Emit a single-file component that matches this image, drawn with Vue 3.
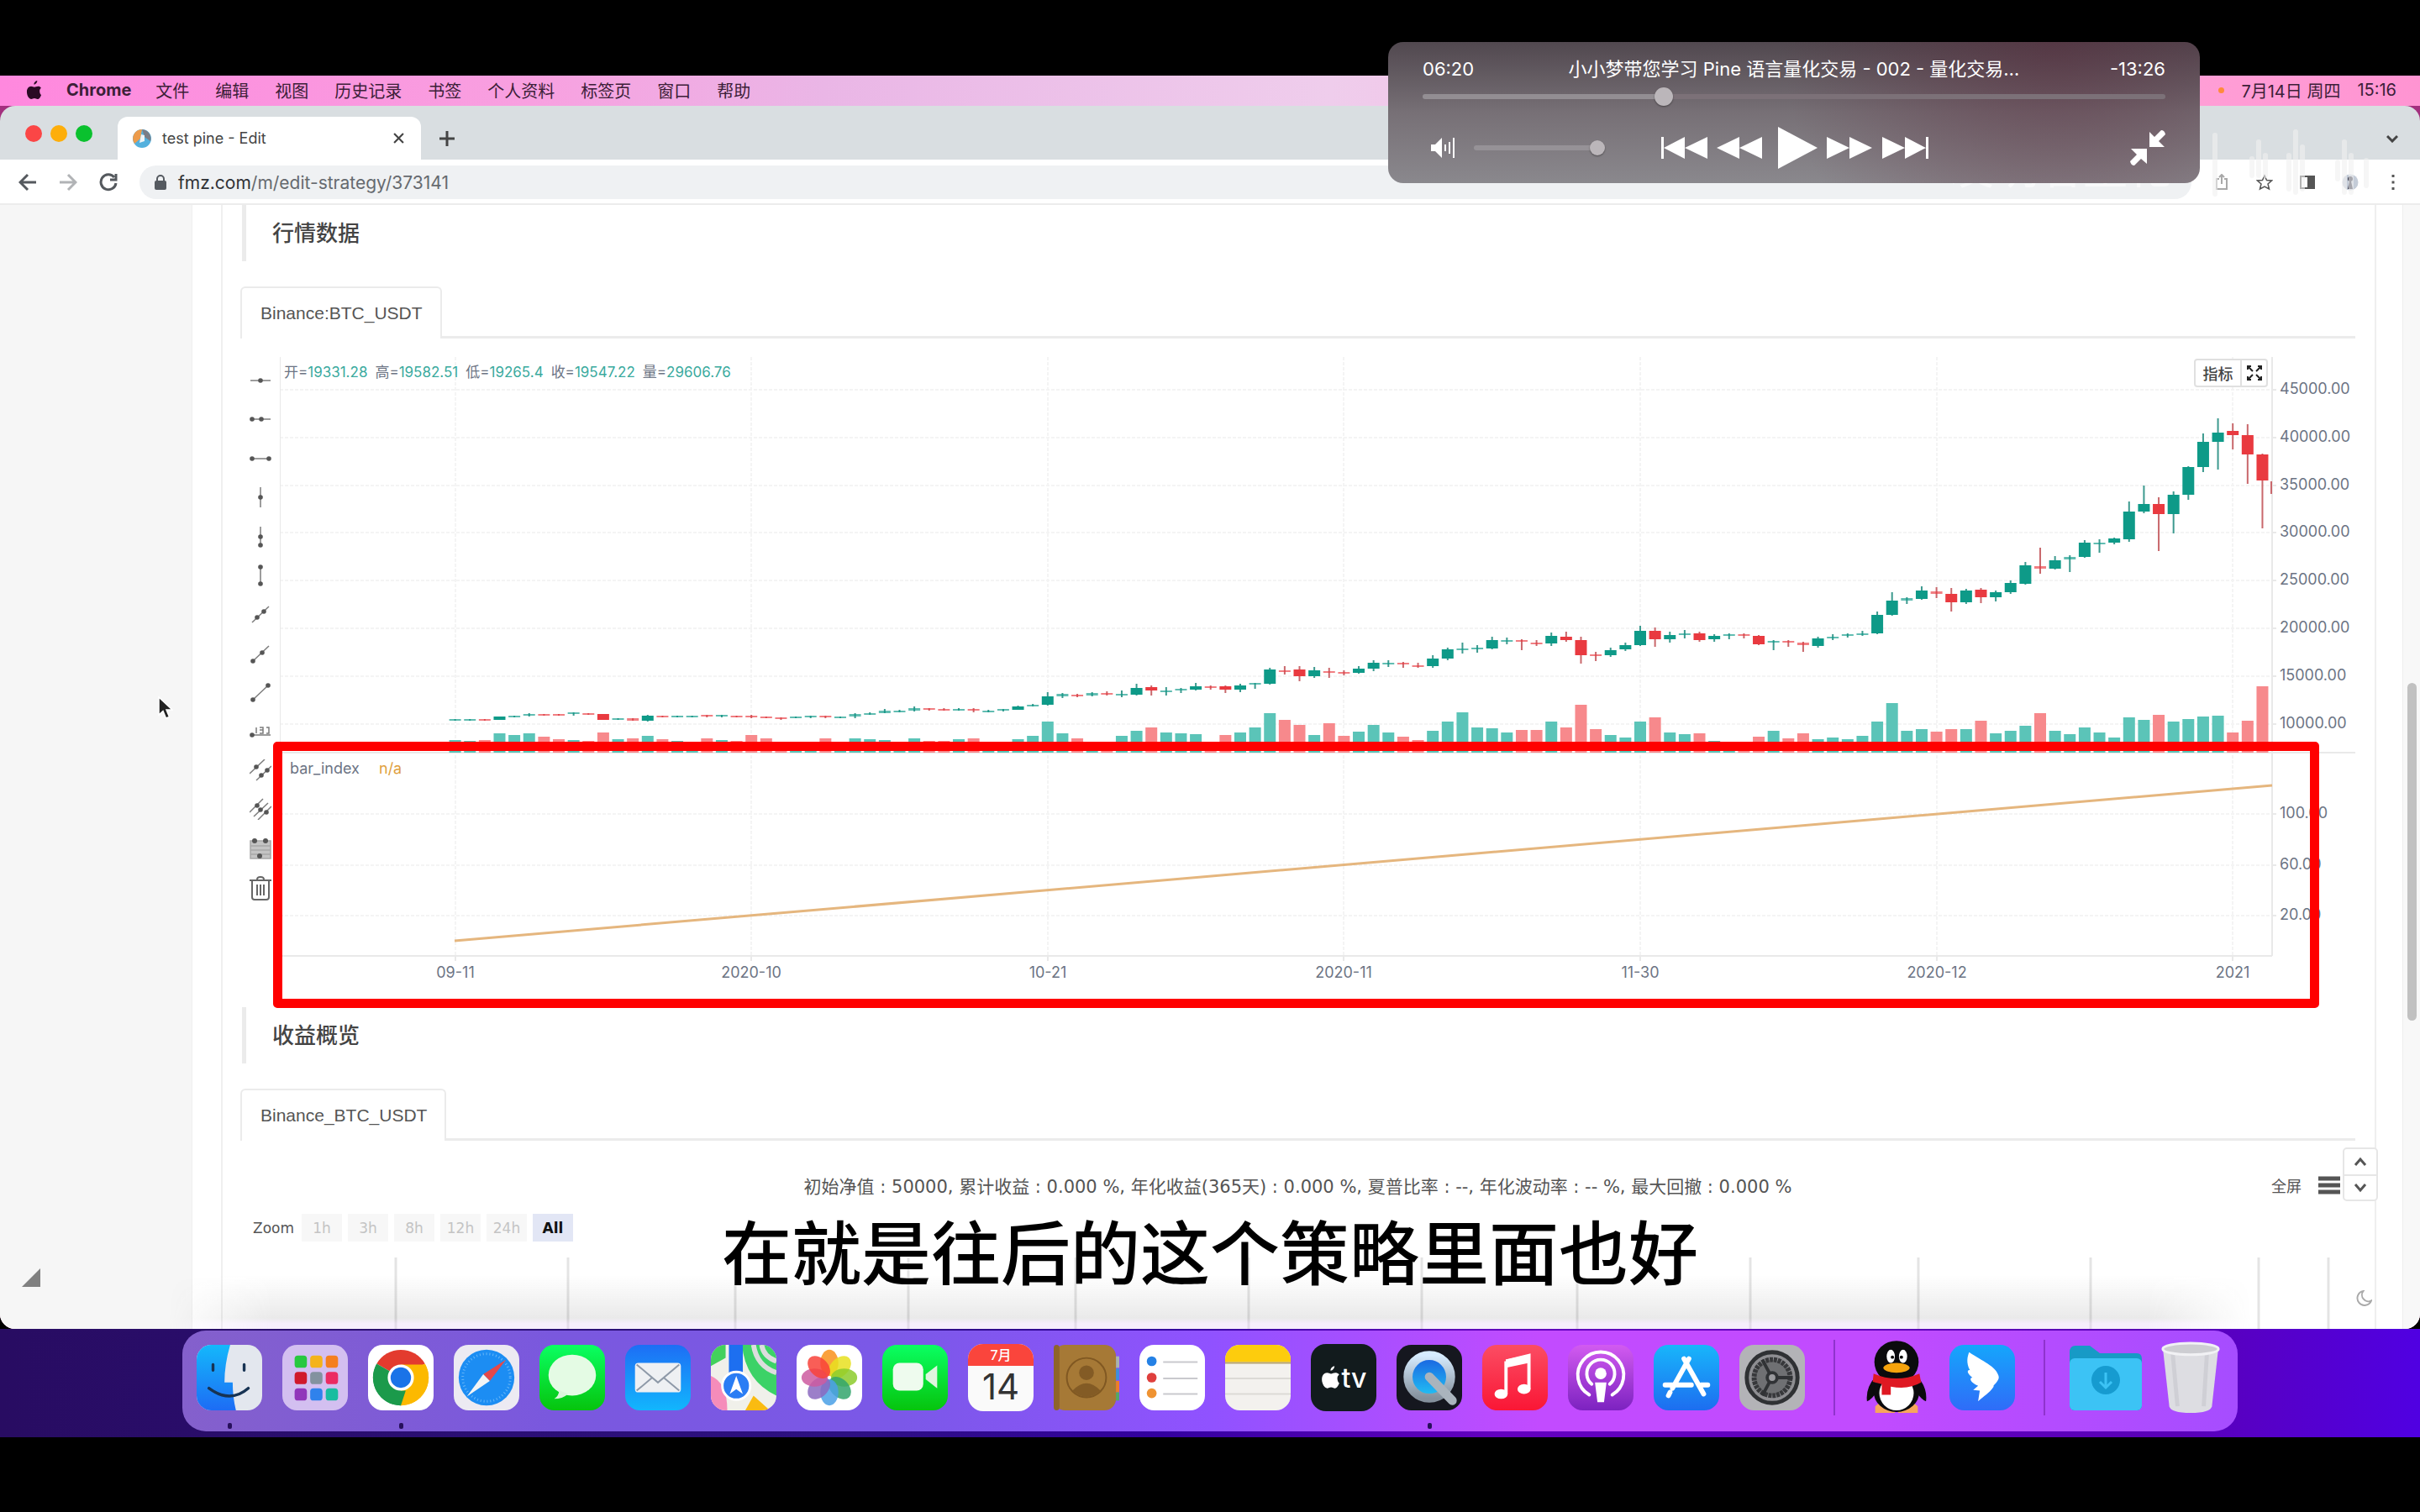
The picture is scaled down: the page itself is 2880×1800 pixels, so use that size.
<script setup>
const menus = ['文件', '编辑', '视图', '历史记录', '书签', '个人资料', '标签页', '窗口', '帮助']

// Layout of the price pane, in chart units
const FIRST_X = 541.6
const STEP = 17.63
const VOLUME_BASE = 896
const barX = (i) => FIRST_X + STEP * i

// [rising, body top, body bottom, wick top, wick bottom, volume top]
const bars = [
  [1, 856, 858, 856, 858, 881], [1, 856, 858, 856, 858, 882], [0, 856, 858, 856, 858, 881], [1, 853, 857, 853, 857, 873],
  [1, 852, 854, 852, 854, 875], [1, 850, 852, 849, 853, 873], [0, 850, 852, 850, 852, 877], [0, 850, 852, 850, 852, 880],
  [1, 848, 850, 848, 852, 881], [0, 849, 851, 849, 851, 882], [0, 850, 857, 850, 857, 872], [1, 855, 857, 855, 857, 880],
  [0, 855, 858, 855, 858, 879], [1, 852, 858, 851, 859, 876], [0, 852, 854, 852, 854, 880], [1, 852, 854, 852, 854, 882],
  [1, 852, 854, 852, 854, 883], [0, 851, 853, 851, 854, 879], [1, 851, 853, 851, 854, 881], [0, 852, 854, 852, 854, 882],
  [0, 852, 854, 851, 855, 875], [0, 853, 855, 853, 855, 879], [0, 854, 856, 854, 857, 884], [1, 853, 855, 853, 855, 885],
  [1, 852, 854, 852, 855, 883], [0, 852, 854, 852, 855, 879], [1, 853, 855, 853, 855, 884], [1, 850, 853, 849, 855, 879],
  [1, 849, 851, 848, 851, 880], [1, 846, 849, 844, 849, 881], [1, 846, 848, 845, 848, 884], [1, 843, 846, 841, 847, 879],
  [0, 843, 845, 843, 846, 882], [0, 844, 846, 843, 846, 882], [1, 844, 846, 843, 846, 880], [0, 844, 846, 843, 848, 879],
  [1, 846, 848, 845, 848, 884], [1, 844, 846, 844, 847, 884], [1, 841, 845, 840, 845, 880], [1, 839, 841, 838, 841, 876],
  [1, 829, 839, 824, 840, 859], [1, 826, 829, 825, 831, 873], [0, 827, 829, 826, 830, 879], [1, 825, 828, 824, 829, 884],
  [0, 825, 827, 823, 828, 884], [1, 826, 828, 822, 830, 876], [1, 819, 827, 814, 828, 870], [0, 818, 822, 816, 828, 866],
  [1, 822, 824, 818, 828, 872], [1, 820, 822, 819, 825, 873], [1, 817, 821, 813, 822, 874], [0, 817, 819, 816, 821, 884],
  [0, 817, 821, 816, 825, 875], [1, 816, 821, 814, 824, 872], [1, 813, 815, 813, 820, 866], [1, 797, 814, 795, 815, 849],
  [0, 798, 800, 793, 803, 857], [0, 797, 805, 793, 811, 863], [1, 798, 805, 794, 807, 875], [0, 799, 801, 795, 807, 861],
  [0, 800, 802, 798, 804, 876], [1, 796, 801, 793, 802, 871], [1, 789, 796, 786, 799, 863], [1, 789, 791, 786, 794, 872],
  [0, 789, 791, 788, 795, 877], [0, 792, 794, 789, 795, 881], [1, 784, 793, 780, 795, 870], [1, 773, 784, 771, 786, 859],
  [1, 772, 774, 765, 778, 848], [1, 771, 773, 768, 777, 866], [1, 762, 772, 758, 773, 867], [1, 762, 764, 759, 767, 872],
  [0, 762, 764, 761, 774, 869], [0, 765, 767, 762, 769, 869], [1, 757, 766, 753, 769, 859], [0, 758, 762, 752, 764, 866],
  [0, 762, 780, 758, 790, 839], [0, 779, 781, 776, 787, 868], [1, 774, 780, 771, 782, 875], [1, 768, 773, 765, 775, 878],
  [1, 751, 768, 745, 769, 859], [0, 751, 761, 747, 770, 854], [1, 756, 761, 752, 765, 872], [1, 754, 756, 750, 760, 874],
  [0, 754, 762, 752, 764, 873], [1, 757, 761, 755, 764, 882], [1, 755, 757, 754, 761, 884], [0, 755, 757, 754, 760, 884],
  [0, 757, 767, 756, 768, 877], [1, 763, 765, 762, 774, 870], [0, 763, 765, 762, 770, 879], [0, 765, 768, 764, 776, 873],
  [1, 760, 769, 758, 771, 880], [1, 758, 760, 755, 762, 878], [1, 755, 757, 754, 759, 880], [1, 754, 756, 751, 757, 876],
  [1, 732, 754, 728, 755, 859], [1, 715, 732, 705, 733, 837], [1, 712, 715, 711, 719, 870], [1, 703, 713, 698, 714, 868],
  [0, 704, 707, 699, 712, 871], [0, 707, 717, 700, 728, 868], [1, 703, 717, 701, 719, 868], [0, 702, 711, 700, 718, 858],
  [1, 705, 711, 703, 716, 873], [1, 694, 705, 691, 707, 870], [1, 673, 695, 669, 696, 864], [0, 674, 677, 652, 683, 849],
  [1, 667, 677, 662, 678, 870], [1, 663, 666, 661, 681, 874], [1, 646, 663, 643, 664, 866], [1, 646, 648, 642, 658, 872],
  [1, 641, 646, 640, 648, 878], [1, 609, 642, 597, 645, 854], [1, 600, 609, 578, 611, 857], [0, 600, 612, 592, 656, 851],
  [1, 589, 612, 585, 635, 859], [1, 556, 589, 555, 595, 856], [1, 526, 556, 516, 562, 853], [1, 515, 526, 498, 559, 852],
  [0, 513, 518, 504, 535, 872], [0, 518, 541, 505, 576, 858], [0, 541, 572, 540, 629, 817],
]

const prices = [45000, 40000, 35000, 30000, 25000, 20000, 15000, 10000].map((p, i) => ({ label: p.toFixed(2), y: Math.round(464 + 56.8 * i) }))
const indexTicks = [{ label: '100.00', y: 969 }, { label: '60.00', y: 1030 }, { label: '20.00', y: 1090 }]
const dates = ['09-11', '2020-10', '10-21', '2020-11', '11-30', '2020-12', '2021'].map((label, i) => ({ label, x: Math.round(barX(20 * i)) }))
const quote = [['开', '19331.28'], ['高', '19582.51'], ['低', '19265.4'], ['收', '19547.22'], ['量', '29606.76']]

const tools = [
  ['水平直线', 'M1 13H25', [[13, 13]]],
  ['水平射线', 'M2 13H25', [[3, 13], [14, 13]]],
  ['水平线段', 'M2 13H24', [[3, 13], [23, 13]]],
  ['垂直直线', 'M13 1V25', [[13, 13]]],
  ['垂直射线', 'M13 1V24', [[13, 13], [13, 23]]],
  ['垂直线段', 'M13 2V24', [[13, 3], [13, 23]]],
  ['直线', 'M3 23L23 4', [[9, 17], [17, 10]]],
  ['射线', 'M4 22L23 4', [[4, 22], [15, 12]]],
  ['线段', 'M4 22L22 5', [[4, 22], [22, 5]]],
  ['价格线', 'M2 18H25M8 9V16M12 9H16V12H12M16 12V16H12M20 9H23V16H20', [[3, 18]]],
  ['价格通道', 'M0 17L18 0M8 25L26 8', [[8, 9], [14, 19], [21, 13]]],
  ['平行线', 'M0 17L16 1M5 22L22 6M10 26L26 10', [[9, 9], [13, 14], [20, 17]]],
]

const ranges = ['1h', '3h', '8h', '12h', '24h', 'All']
const returnGrid = [471, 676, 875, 1081, 1280, 1486, 1692, 1877, 2083, 2283, 2488, 2688, 2771]
const petals = ['#f9901b', '#e8e020', '#8ccb2b', '#33a46c', '#4aa0e6', '#8b68c0', '#cc5aa0', '#f8423a']
</script>

<template>
  <div class="screen">
    <header class="menubar">
      <svg class="apple" viewBox="0 0 20 24"><path d="M14 0c.2 2-1.700 4.600-4 4.800C9.700 2.700 11.800.4 14 0zM17 12.500c0-2.200 1.700-3.300 1.900-3.500C17.800 7.300 16 7 15 7c-1.800 0-3.300 1-4.500 1C9.300 8 8 7 6.300 7 3.500 7.100 1 9.400 1 14c0 4.600 3 9 5.500 9 1.500 0 2.300-1 4-1s2.300 1 4 1c2.200 0 4-3.500 4.500-5.300-.200-.1-2-1.300-2-5.200z" /></svg>
      <b>Chrome</b>
      <nav class="menus"><span v-for="m in menus" :key="m">{{ m }}</span></nav>
      <i class="rec"></i>
      <time>7月14日 周四</time><time class="clock">15:16</time>
    </header>

    <section class="window">
      <div class="tabstrip">
        <div class="lights"><i class="red"></i><i class="amber"></i><i class="green"></i></div>
        <div class="tab">
          <svg class="favicon" viewBox="0 0 22 22"><circle cx="11" cy="11" r="11" fill="#54b0dd" /><path d="M11 0A11 11 0 0 0 2 17L9 11Z" fill="#ed9b4b" /><path d="M11 0a11 11 0 0 1 10 14l-7-5Z" fill="#7b7d86" /><path d="M8 16l2-10 4 1v7z" fill="#eef3f6" /></svg>
          <span>test pine - Edit</span>
          <button aria-label="关闭标签页"><svg viewBox="0 0 12 12"><path d="M1 1l10 10M11 1L1 11" /></svg></button>
        </div>
        <button class="newtab" aria-label="新标签页"><svg viewBox="0 0 18 18"><path d="M9 0v18M0 9h18" /></svg></button>
        <button class="expand" aria-label="搜索标签页"><svg viewBox="0 0 14 10"><path d="M1 2l6 6 6-6" /></svg></button>
      </div>
      <div class="toolbar">
        <button aria-label="后退"><svg viewBox="0 0 22 22"><path d="M21 11H2M11 2l-9 9 9 9" /></svg></button>
        <button aria-label="前进" class="dim"><svg viewBox="0 0 22 22"><path d="M1 11h19M11 2l9 9-9 9" /></svg></button>
        <button aria-label="重新加载"><svg viewBox="0 0 22 22"><path d="M18 5a9 9 0 1 0 2 7M20 1v7h-7" /></svg></button>
        <div class="url">
          <svg class="lock" viewBox="0 0 14 18"><rect y="7" width="14" height="11" rx="2" fill="#555a60" /><path d="M3 8V5a4 4 0 0 1 8 0v3" fill="none" stroke="#555a60" stroke-width="2" /></svg>
          <p><span>fmz.com</span>/m/edit-strategy/373141</p>
        </div>
        <div class="ext">
          <svg viewBox="0 0 20 20" opacity=".5"><path d="M7 6H4v12h12V6h-3M10 12V2M7 4l3-3 3 3" /></svg>
          <svg viewBox="0 0 20 20"><path d="M10 2l2.500 5.500 6 .5-4.500 4 1.500 6L10 15l-5.500 3 1.500-6-4.500-4 6-.5z" stroke-width="1.500" /></svg>
          <svg viewBox="0 0 20 20"><path d="M2 3h16v14H2z" /><path d="M11 3h7v14h-7z" fill="#555" /></svg>
          <svg viewBox="0 0 20 20"><circle cx="10" cy="10" r="9.500" fill="#c4ccd8" stroke="none" /><circle cx="10" cy="6" r="3" fill="#334" stroke="none" /><path d="M7 18l2-9h2l2 9z" fill="#334" stroke="none" /></svg>
          <svg viewBox="0 0 20 20"><path d="M10 1v3M10 8.500v3M10 16v3" stroke-width="3" /></svg>
        </div>
      </div>

      <div class="page">
        <aside class="gutter"></aside>
        <main>
          <div class="card">
            <h2>行情数据</h2>
            <div class="tabs"><a href="#quote">Binance:BTC_USDT</a><i></i></div>

            <div class="chartrow">
              <div class="tools">
                <button v-for="[name, d, dots] in tools" :key="name" :aria-label="name">
                  <svg viewBox="0 0 26 26"><path :d="d" fill="none" stroke="#7c7c7c" stroke-width="1.500" /><circle v-for="(c, k) in dots" :key="k" :cx="c[0]" :cy="c[1]" r="2.800" fill="#555" /></svg>
                </button>
                <button aria-label="斐波那契"><svg viewBox="0 0 26 26"><path d="M1 4H25V25H1ZM1 10H25M1 15H25M1 20H25" fill="#c4c4c4" stroke="#a8a8a8" stroke-width="1.500" /><g fill="#555"><circle cx="6" cy="4" r="3" /><circle cx="19" cy="4" r="3" /><circle cx="12" cy="22" r="3" /></g></svg></button>
                <button aria-label="删除"><svg viewBox="0 0 26 30"><path d="M0 5H26M9 4Q9 1 13 1T17 4M3 5V25Q3 28 6 28H20Q23 28 23 25V5M9 10V23M13 10V23M17 10V23" fill="none" stroke="#666" stroke-width="2" /></svg></button>
              </div>

              <div class="plot">
                <svg class="chart" viewBox="333 418 2470 762">
                  <g class="grid">
                    <path v-for="p in prices" :key="p.y" :d="`M333 ${p.y}H2704`" />
                    <path v-for="p in indexTicks" :key="p.y" :d="`M333 ${p.y}H2704`" />
                    <path v-for="d in dates" :key="d.x" :d="`M${d.x} 425V1138`" />
                  </g>
                  <g class="axis">
                    <path d="M333 425V1138M333 896H2803M333 1138H2704M2704 425V1138" />
                    <path v-for="d in dates" :key="d.x" :d="`M${d.x} 1138v6`" />
                    <path v-for="p in [...prices, ...indexTicks]" :key="p.y" :d="`M2704 ${p.y}h5`" />
                  </g>
                  <g v-for="(b, i) in bars" :key="i" :class="b[0] ? 'up' : 'down'">
                    <rect class="vol" :x="barX(i) - 7" :y="b[5]" width="14" :height="VOLUME_BASE - b[5]" />
                    <rect class="wick" :x="barX(i) - 1" :y="b[3]" width="2" :height="b[4] - b[3]" />
                    <rect class="body" :class="{ thin: b[2] - b[1] < 4 }" :x="barX(i) - 7" :y="b[1]" width="14" :height="b[2] - b[1]" />
                  </g>
                  <rect class="wick down" x="2702" y="573" width="2" height="15" />
                  <path class="series" d="M541 1120L2704 935" />
                  <g class="labels">
                    <text v-for="p in prices" :key="p.y" x="2713" :y="p.y + 5">{{ p.label }}</text>
                    <text v-for="p in indexTicks" :key="p.y" x="2713" :y="p.y + 5">{{ p.label }}</text>
                    <text v-for="d in dates" :key="d.x" :x="d.x" y="1164" text-anchor="middle">{{ d.label }}</text>
                    <text x="345" y="921">bar_index</text>
                    <text x="451" y="921" class="na">n/a</text>
                  </g>
                </svg>
                <p class="quote"><span v-for="q in quote" :key="q[0]">{{ q[0] }}=<em>{{ q[1] }}</em></span></p>
                <div class="actions">
                  <button>指标</button>
                  <button aria-label="全屏"><svg viewBox="0 0 18 18"><path d="M1 5V1H5M1 1L7 7M13 1H17V5M17 1L11 7M1 13V17H5M1 17L7 11M17 13V17H13M17 17L11 11" /></svg></button>
                </div>
                <div class="highlight"></div>
              </div>
            </div>

            <h2>收益概览</h2>
            <div class="tabs"><a href="#returns">Binance_BTC_USDT</a><i></i></div>
            <div class="returns">
              <div class="stats">
                <span></span>
                <p>初始净值 : 50000, 累计收益 : 0.000 %, 年化收益(365天) : 0.000 %, 夏普比率 : --, 年化波动率 : -- %, 最大回撤 : 0.000 %</p>
                <div class="exports"><button>全屏</button><button aria-label="图表菜单"><svg viewBox="0 0 26 22"><path d="M0 3H26M0 11H26M0 19H26" /></svg></button></div>
              </div>
              <div class="zoom"><span>Zoom</span><button v-for="r in ranges" :key="r" :class="{ on: r === 'All' }">{{ r }}</button></div>
              <svg class="lines" viewBox="286 1496 2517 85" preserveAspectRatio="none"><path v-for="x in returnGrid" :key="x" :d="`M${x} 1496V1581`" /></svg>
            </div>
          </div>
        </main>
        <div class="scroll"><i></i></div>

        <div class="shade"></div>
        <div class="jump">
          <button aria-label="向上"><svg viewBox="0 0 16 12"><path d="M2 10l6-7 6 7" /></svg></button>
          <button aria-label="向下"><svg viewBox="0 0 16 12"><path d="M2 2l6 7 6-7" /></svg></button>
        </div>
        <svg class="moon" viewBox="0 0 20 20"><path d="M9 1A9 9 0 1 0 19 13 8 8 0 0 1 9 1z" /></svg>
        <svg class="corner" viewBox="0 0 22 22"><path d="M22 0V22H0z" fill="#808080" /></svg>
        <svg class="cursor" viewBox="0 0 18 28"><path d="M1 1V22L6 17.500 9.500 26 13.500 24.500 10 16H17z" fill="#222" stroke="#fff" stroke-width="1.500" /></svg>
      </div>
    </section>

    <footer class="desk">
      <div class="dock">
        <div class="app run"><svg viewBox="0 0 80 80"><defs><linearGradient id="fb" x2="0" y2="1"><stop stop-color="#14b8fb" /><stop offset="1" stop-color="#1d6cf5" /></linearGradient><clipPath id="sq"><rect width="80" height="80" rx="18" /></clipPath></defs><g clip-path="url(#sq)"><path fill="#e3e7ee" d="M0 0h80v80H0z" /><path fill="url(#fb)" d="M0 0h41Q34 24 34 46h10Q44 64 48 80H0z" /><g fill="none" stroke="#173353" stroke-width="3.500" stroke-linecap="round"><path d="M20 24v7M58 24v7M15 53q26 19 48 0" /></g></g></svg></div>
        <div class="app"><svg viewBox="0 0 80 80"><rect width="80" height="80" rx="18" fill="#d3bff0" /><g><rect x="15" y="13" width="15" height="15" rx="4" fill="#28c840" /><rect x="34" y="13" width="15" height="15" rx="4" fill="#f4b31c" /><rect x="53" y="13" width="15" height="15" rx="4" fill="#f57f1f" /><rect x="15" y="33" width="15" height="15" rx="4" fill="#d0192b" /><rect x="34" y="33" width="15" height="15" rx="4" fill="#83929f" /><rect x="53" y="33" width="15" height="15" rx="4" fill="#eb2b62" /><rect x="15" y="53" width="15" height="15" rx="4" fill="#9136ba" /><rect x="34" y="53" width="15" height="15" rx="4" fill="#2f82ec" /><rect x="53" y="53" width="15" height="15" rx="4" fill="#19bda0" /></g></svg></div>
        <div class="app run"><svg viewBox="0 0 80 80"><rect width="80" height="80" rx="18" fill="#fff" /><path d="M40 40L10.600 23A34 34 0 0 1 69.400 23z" fill="#e33b2e" /><path d="M40 40L69.400 23A34 34 0 0 1 40 74z" fill="#fcb900" /><path d="M40 40L40 74A34 34 0 0 1 10.600 23z" fill="#1b9a4b" /><path d="M40 24H70A34 34 0 0 1 40 74L54 48z" fill="#fcb900" /><path d="M10.600 23L26 48 40 56 46 56 40 74A34 34 0 0 1 10.600 23z" fill="#1b9a4b" /><circle cx="40" cy="40" r="16" fill="#fff" /><circle cx="40" cy="40" r="12.500" fill="#1a73e8" /></svg></div>
        <div class="app"><svg viewBox="0 0 80 80"><rect width="80" height="80" rx="18" fill="#eceaf2" /><circle cx="40" cy="40" r="34" fill="#1c8df3" /><circle cx="40" cy="40" r="29" fill="none" stroke="#6ab8f8" stroke-width="3" stroke-dasharray="1 3" /><path d="M64 18L44 44 36 36z" fill="#e4484a" /><path d="M16 63L36 36 44 44z" fill="#f2f4f6" /></svg></div>
        <div class="app"><svg viewBox="0 0 80 80"><defs><linearGradient id="gr" x2="0" y2="1"><stop stop-color="#0aff62" /><stop offset="1" stop-color="#06c40d" /></linearGradient></defs><rect width="80" height="80" rx="18" fill="url(#gr)" /><ellipse cx="40" cy="37" rx="29" ry="25" fill="#e4fbe4" /><path d="M24 55q0 7-6 11 10 0 17-6z" fill="#dcf5dc" /></svg></div>
        <div class="app"><svg viewBox="0 0 80 80"><defs><linearGradient id="bl" x2="0" y2="1"><stop stop-color="#1d6ef5" /><stop offset="1" stop-color="#12b6fd" /></linearGradient></defs><rect width="80" height="80" rx="18" fill="url(#bl)" /><rect x="12" y="22" width="56" height="36" rx="4" fill="#eef0f3" /><path d="M14 24l26 22 26-22M14 56l19-16M66 56L47 40" fill="none" stroke="#8e99a8" stroke-width="2" /></svg></div>
        <div class="app"><svg viewBox="0 0 80 80"><g clip-path="url(#sq)"><path fill="#f0f0ea" d="M0 0h80v80H0z" /><path d="M0 0h18v16L0 26z" fill="#43d15c" /><path d="M38 0h42v62Q42 44 38 0z" fill="#3cd267" /><path d="M52 0q4 26 28 34M62 0q2 14 18 20" fill="none" stroke="#ddd" stroke-width="6" /><path d="M0 38q20 8 20 42H0z" fill="#f58cba" /><path d="M52 62L72 80H42z" fill="#fabb11" /><path d="M22 0h17v40H22z" fill="#1d6ff0" /><circle cx="31" cy="50" r="17" fill="#2a7df4" stroke="#fff" stroke-width="3" /><path d="M31 38l8 22-8-6-8 6z" fill="#fff" /></g></svg></div>
        <div class="app"><svg viewBox="0 0 80 80"><rect width="80" height="80" rx="18" fill="#fff" /><ellipse v-for="(c, i) in petals" :key="c" cx="40" cy="22" rx="11" ry="16" :fill="c" opacity=".85" :transform="`rotate(${i * 45} 40 40)`" /></svg></div>
        <div class="app"><svg viewBox="0 0 80 80"><rect width="80" height="80" rx="18" fill="url(#gr)" /><rect x="13" y="22" width="37" height="34" rx="8" fill="#eefbee" /><path d="M53 36l14-11v28L53 42z" fill="#dff5df" /></svg></div>
        <div class="app calendar"><span>7月</span><b>14</b></div>
        <div class="app"><svg viewBox="0 0 80 80"><path d="M72 14h8v14h-8z" fill="#a9b3b0" /><path d="M72 29h8v14h-8z" fill="#3e8ee0" /><path d="M72 44h8v14h-8z" fill="#ec7d2b" /><path d="M72 58h8v10h-8z" fill="#53a867" /><rect width="76" height="80" rx="14" fill="#a67936" /><rect width="7" height="80" rx="4" fill="#8e642a" /><g fill="none" stroke="#805822" stroke-width="2"><circle cx="40" cy="40" r="24" /></g><circle cx="40" cy="34" r="9" fill="#835b25" /><path d="M23 56q17-18 34 0-17 15-34 0z" fill="#835b25" /></svg></div>
        <div class="app"><svg viewBox="0 0 80 80"><rect width="80" height="80" rx="18" fill="#fff" /><circle cx="15" cy="20" r="6" fill="#2581e5" /><circle cx="15" cy="40" r="6" fill="#df3f3d" /><circle cx="15" cy="59" r="6" fill="#ef9332" /><path d="M29 21h42M29 41h42M29 60h42" stroke="#c9c9ce" stroke-width="2" /></svg></div>
        <div class="app"><svg viewBox="0 0 80 80"><g clip-path="url(#sq)"><path fill="#f3f1ee" d="M0 0h80v80H0z" /><path d="M0 0h80v21H0z" fill="#fdcc0d" /><path d="M0 22h80" stroke="#b7a46d" stroke-width="2" /><path d="M0 41h80M0 60h80" stroke="#dcdad6" stroke-width="2" /></g></svg></div>
        <div class="app tv"><svg viewBox="0 0 20 24"><path d="M14 0c.2 2-1.700 4.600-4 4.800C9.700 2.700 11.800.4 14 0zM17 12.500c0-2.200 1.700-3.300 1.900-3.500C17.800 7.300 16 7 15 7c-1.800 0-3.300 1-4.500 1C9.300 8 8 7 6.300 7 3.500 7.100 1 9.400 1 14c0 4.600 3 9 5.500 9 1.500 0 2.300-1 4-1s2.300 1 4 1c2.200 0 4-3.500 4.500-5.300-.200-.1-2-1.300-2-5.200z" fill="#fff" /></svg><span>tv</span></div>
        <div class="app run"><svg viewBox="0 0 80 80"><defs><linearGradient id="qt" x2="0" y2="1"><stop stop-color="#d6ecff" /><stop offset="1" stop-color="#84909c" /></linearGradient><linearGradient id="qb" x2="0" y2="1"><stop stop-color="#1a5fe0" /><stop offset="1" stop-color="#22c6f5" /></linearGradient></defs><rect width="80" height="80" rx="18" fill="#15171f" /><circle cx="40" cy="39" r="26" fill="url(#qb)" stroke="url(#qt)" stroke-width="11" /><path d="M40 39L68 68" stroke="#aab4bd" stroke-width="11" stroke-linecap="round" /></svg></div>
        <div class="app"><svg viewBox="0 0 80 80"><defs><linearGradient id="mu" x2="0" y2="1"><stop stop-color="#fb4d63" /><stop offset="1" stop-color="#fa1635" /></linearGradient></defs><rect width="80" height="80" rx="18" fill="url(#mu)" /><path d="M29 20L57 13V54" fill="none" stroke="#fff" stroke-width="4" /><path d="M29 18L57 12V22L29 28z" fill="#fff" /><path d="M29 20V60" stroke="#fff" stroke-width="4" /><ellipse cx="23" cy="60" rx="8" ry="6" fill="#fff" /><ellipse cx="51" cy="54" rx="8" ry="6" fill="#fff" /></svg></div>
        <div class="app"><svg viewBox="0 0 80 80"><defs><linearGradient id="po" x2="0" y2="1"><stop stop-color="#d25bf0" /><stop offset="1" stop-color="#7c22c0" /></linearGradient></defs><rect width="80" height="80" rx="18" fill="url(#po)" /><g fill="none" stroke="#fff" stroke-width="4" stroke-linecap="round"><path d="M26 61A28 28 0 1 1 54 61M29 48A17 17 0 1 1 51 48" /></g><circle cx="40" cy="35" r="7" fill="#fff" /><path d="M33 46h14l-3 24h-8z" fill="#fff" /></svg></div>
        <div class="app"><svg viewBox="0 0 80 80"><defs><linearGradient id="as" x2="0" y2="1"><stop stop-color="#18b6fb" /><stop offset="1" stop-color="#1d6df0" /></linearGradient></defs><rect width="80" height="80" rx="18" fill="url(#as)" /><g stroke="#fff" stroke-width="6" stroke-linecap="round"><path d="M43 17L23 53M37 17L61 60M14 49h32M58 49h8M20 58l-2 4" /></g></svg></div>
        <div class="app"><svg viewBox="0 0 80 80"><rect width="80" height="80" rx="18" fill="#b3b3b7" /><circle cx="40" cy="40" r="31" fill="#8e8e92" stroke="#2f3134" stroke-width="5" /><circle cx="40" cy="40" r="22" fill="#6f7073" stroke="#37383b" stroke-width="6" stroke-dasharray="4 1" /><g stroke="#303235" stroke-width="4"><circle cx="40" cy="40" r="6" fill="#9a9a9e" /><path d="M46 40h19M37 35L28 18M37 45L28 62" /></g></svg></div>
        <i class="sep"></i>
        <div class="app"><svg class="tall" viewBox="0 0 80 90"><g><path d="M14 80q10-10 24 0v8H14zM42 80q14-10 24 0v8H42z" fill="#f7a65c" /><path d="M14 44Q2 58 4 74q6-2 12-12zM66 44q12 14 10 30-6-2-12-12z" fill="#0b0b0d" /><ellipse cx="40" cy="62" rx="28" ry="25" fill="#0b0b0d" /><ellipse cx="40" cy="64" rx="21" ry="21" fill="#fff" /><ellipse cx="40" cy="26" rx="27" ry="26" fill="#0b0b0d" /><ellipse cx="33" cy="19" rx="5" ry="8" fill="#fff" /><ellipse cx="48" cy="19" rx="5" ry="8" fill="#fff" /><circle cx="35" cy="20" r="2" /><circle cx="46" cy="20" r="2" /><ellipse cx="40" cy="33" rx="16" ry="6" fill="#f5a30c" /><path d="M12 40q28 12 56 0l2 11Q55 60 33 56v10H22V53l-11-3z" fill="#df1822" /></g></svg></div>
        <div class="app"><svg viewBox="0 0 80 80"><defs><linearGradient id="di" x2="0" y2="1"><stop stop-color="#15a6fc" /><stop offset="1" stop-color="#2f6cf8" /></linearGradient></defs><rect width="80" height="80" rx="18" fill="url(#di)" /><path d="M24 9C40 20 57 26 60 38 62 44 52 50 54 51 48 60 42 62 35 69L37 56 29 55 35 50C25 46 24 40 28 40 20 34 22 30 25 31 20 22 22 14 24 9z" fill="#fff" /></svg></div>
        <i class="sep"></i>
        <div class="app wide"><svg viewBox="0 0 90 80"><path d="M2 10Q2 2 9 2H26L38 11H82Q88 11 88 18V72Q88 79 82 79H8Q2 79 2 72z" fill="#179ac6" /><rect x="2" y="17" width="86" height="62" rx="6" fill="#3cc3f5" /><circle cx="45" cy="43" r="17" fill="#169bd0" /><path d="M45 34v17M38 45l7 7 7-7" fill="none" stroke="#3cc3f5" stroke-width="3" /></svg></div>
        <div class="app"><svg class="tall" viewBox="0 0 80 90"><path d="M6 8Q40-4 74 8L66 80Q64 88 40 88T14 80z" fill="#dddde2" /><path d="M18 14L24 80M60 14L56 80" stroke="#cfcfd5" stroke-width="5" /><ellipse cx="40" cy="10" rx="34" ry="7" fill="#cdcdd2" stroke="#f1f1f4" stroke-width="3" /></svg></div>
      </div>
    </footer>

    <p class="subtitle">在就是往后的这个策略里面也好</p>
    <div class="watermark">
      <svg viewBox="0 0 210 90"><path d="M6 16v70M58 24v40M50 44v20M66 40v24M102 12v72M94 40v40M110 30v50M160 24v60M152 48v20M168 40v44M186 46v30" /></svg>
      <span>发明者量化</span>
    </div>

    <section class="player">
      <div class="info"><time>06:20</time><h1>小小梦带您学习 Pine 语言量化交易 - 002 - 量化交易…</h1><time>-13:26</time></div>
      <input class="seek" type="range" min="0" max="100" value="32" aria-label="播放进度" />
      <div class="controls">
        <svg class="speaker" viewBox="0 0 28 26"><path d="M0 9h5l8-8v24l-8-8H0z" fill="#fff" /><path d="M17 9v8M22 6v14M27 1v24" stroke="#fff" stroke-width="2" /></svg>
        <input class="volume" type="range" min="0" max="100" value="100" aria-label="音量" />
        <div class="transport">
          <button aria-label="上一个"><svg viewBox="0 0 55 26"><path d="M0 0h3v26H0zM28 0v26L3 13zM55 0v26L28 13z" /></svg></button>
          <button aria-label="快退"><svg viewBox="0 0 55 26"><path d="M27 0v26L0 13zM54 0v26L27 13z" /></svg></button>
          <button class="play" aria-label="播放"><svg viewBox="0 0 47 50"><path d="M0 0v50l47-25z" /></svg></button>
          <button aria-label="快进"><svg viewBox="0 0 55 26"><path d="M0 0v26l27-13zM27 0v26l27-13z" /></svg></button>
          <button aria-label="下一个"><svg viewBox="0 0 55 26"><path d="M0 0v26l27-13zM27 0v26l25-13zM52 0h3v26h-3z" /></svg></button>
        </div>
        <button class="exit" aria-label="退出全屏"><svg viewBox="0 0 42 42"><path d="M23 20V2l6 6 8-8q4 0 5 5l-8 8 7 7zM20 22v18l-7-6-8 8q-4 0-5-5l8-8-7-7z" /></svg></button>
      </div>
    </section>
  </div>
</template>

<style>
body { background: #000; }
</style>

<style scoped>
* { box-sizing: border-box; }
p, h1, h2 { margin: 0; font-weight: 400; }
button { padding: 0; border: 0; background: none; font: inherit; color: inherit; display: flex; align-items: center; justify-content: center; }
svg { display: block; }
.screen { position: relative; min-height: 100vh; display: flex; flex-direction: column; padding: 90px 0; overflow: hidden; background: #000; font-family: Inter, "Noto Sans CJK SC", sans-serif; color: #444; }

.menubar { height: 36px; display: flex; align-items: center; padding: 0 28px 2px 31px; font-size: 20px; color: #3c2038; background: linear-gradient(90deg, #ff88de, #f8a0e0 22%, #eab6e6 34%, #efcdec 55%, #ff9fd6 90%, #ff94d2); }
.apple { width: 19px; height: 23px; fill: #2a0a24; }
.menubar b { margin-left: 29px; font-weight: 700; }
.menus { display: flex; gap: 31px; margin-left: 29px; flex: 1; }
.rec { width: 7px; height: 7px; border-radius: 50%; background: #ff8a3c; margin-right: 20px; }
.clock { margin-left: 20px; }

.window { flex: 1; min-height: 0; display: flex; flex-direction: column; background: #a3307e; border-radius: 0 0 18px 18px; overflow: hidden; }
.tabstrip { height: 64px; display: flex; align-items: flex-end; background: #d9dee1; border-radius: 18px 18px 0 0; }
.lights { display: flex; gap: 10px; padding: 0 30px 21px; }
.lights i { width: 20px; height: 20px; border-radius: 50%; }
.red { background: #fb4646; }
.amber { background: #fdae0b; }
.green { background: #0ac12e; }
.tab { width: 361px; height: 51px; display: flex; align-items: center; padding: 0 20px 0 18px; background: #fff; border-radius: 12px 12px 0 0; font-size: 18px; }
.tab span { flex: 1; padding-left: 13px; }
.favicon { width: 22px; height: 22px; }
.tab button svg { width: 13px; height: 13px; stroke: #444; stroke-width: 2; }
.newtab { width: 62px; height: 51px; }
.newtab svg { width: 18px; stroke: #444; stroke-width: 3; }
.expand { width: 66px; height: 51px; margin-left: auto; }
.expand svg { width: 14px; fill: none; stroke: #444; stroke-width: 3; }
.toolbar { height: 54px; display: flex; align-items: center; background: #fff; border-bottom: 2px solid #ececec; padding: 2px 22px 0; }
.toolbar button { width: 22px; margin-right: 26px; }
.toolbar button svg { width: 22px; fill: none; stroke: #55595e; stroke-width: 3; }
.toolbar .dim { opacity: .45; }
.url { flex: 1; height: 40px; margin-right: 26px; display: flex; align-items: center; gap: 14px; padding-left: 18px; border-radius: 20px; background: #eff1f3; font-size: 21px; color: #666a6f; }
.url span { color: #2f3236; }
.lock { width: 14px; height: 18px; }
.ext { display: flex; gap: 31px; }
.ext svg { width: 20px; fill: none; stroke: #555; stroke-width: 2; }

.page { position: relative; flex: 1; display: flex; overflow: hidden; background: #fff; }
.gutter { width: 229px; background: #f6f6f6; border-right: 1px solid #efefef; }
main { flex: 1; padding: 0 31px 0 34px; }
.card { height: 100%; padding: 0 23px 0 21px; border: solid #efefef; border-width: 0 2px; }
h2 { height: 67px; margin-left: 2px; padding-left: 31px; border-left: 5px solid #ebebeb; font-size: 26px; font-weight: 500; line-height: 68px; color: #444; }
.tabs { display: flex; margin-top: 30px; }
.tabs a { height: 62px; padding: 0 21px 0 22px; border: 2px solid #ebebeb; border-bottom: 0; border-radius: 6px 6px 0 0; font: 21px/60px "Liberation Sans", Arial, sans-serif; color: #555; text-decoration: none; }
.tabs i { flex: 1; border-bottom: 3px solid #ebebeb; }
.chartrow { display: flex; margin: 15px 0 19px; }
.tools { width: 47px; display: flex; flex-direction: column; justify-content: space-between; padding: 22px 0 107px 11px; }
.tools button { width: 26px; }
.tools svg { width: 26px; }
.plot { position: relative; flex: 1; }
.chart { width: 100%; }
.grid path { stroke: #f4f4f4; stroke-width: 2; stroke-dasharray: 4 2; }
.axis path { fill: none; stroke: #e9e9e9; stroke-width: 2; }
.up .vol { fill: #5bc4b8; }
.down .vol { fill: #f7898c; }
.up .body { fill: #0e9a88; }
.down .body { fill: #e93a40; }
.up .wick { fill: #3d9a8f; }
.down .wick, .wick.down { fill: #c9686c; }
.body.thin { opacity: .65; }
.series { fill: none; stroke: #e5b67e; stroke-width: 3; }
.labels { font-size: 18px; fill: #6c7484; }
.labels .na { fill: #e0a040; }
.quote { position: absolute; left: 5px; top: 11px; display: flex; gap: 9px; font-size: 17px; line-height: 28px; color: #6c7484; }
.quote em { font-style: normal; color: #3aaa9e; }
.actions { position: absolute; right: 104px; top: 9px; height: 34px; display: flex; background: #fff; border: 2px solid #e0e0e0; border-radius: 4px; font-size: 18px; font-weight: 500; }
.actions button { width: 53px; }
.actions button + button { width: 31px; border-left: 2px solid #e0e0e0; }
.actions svg { width: 18px; fill: none; stroke: #222; stroke-width: 2; }
.highlight { position: absolute; left: -8px; right: 43px; top: 465px; height: 317px; border: 11px solid #f00; border-radius: 5px; }

.returns { font-family: "DejaVu Sans", "Noto Sans CJK SC", sans-serif; color: #555; }
.stats { display: grid; grid-template-columns: 1fr auto 1fr; align-items: center; height: 34px; margin-top: 36px; }
.stats p { font-size: 21px; }
.exports { display: flex; justify-content: flex-end; gap: 20px; padding-right: 18px; font-size: 18px; }
.exports svg { width: 26px; stroke: #555; stroke-width: 5; }
.zoom { display: flex; align-items: center; gap: 7px; margin: 17px 0 19px 15px; font-size: 17px; }
.zoom span { width: 51px; }
.zoom button { width: 48px; height: 33px; background: #f7f7f7; color: #c4c4c4; }
.zoom .on { background: #e2e6f5; color: #111; font-weight: 700; }
.lines { width: 100%; height: 85px; }
.lines path { stroke: #e4e4e4; stroke-width: 3; }
.scroll { width: 21px; padding: 569px 4px 0 5px; background: #f8f8f8; border-left: 1px solid #eee; }
.scroll i { display: block; height: 402px; border-radius: 6px; background: #c1c1c1; }
.shade { position: absolute; left: 200px; right: 200px; bottom: 0; height: 64px; background: linear-gradient(180deg, transparent, rgba(60, 60, 60, .11) 80%, rgba(225, 200, 245, .3) 90%); mask-image: linear-gradient(90deg, transparent, #000 5%, #000 95%, transparent); }
.jump { position: absolute; right: 50px; bottom: 152px; width: 42px; height: 64px; border: 2px solid #e6e6e6; border-radius: 5px; background: #fff; }
.jump button { width: 38px; height: 30px; }
.jump button + button { border-top: 2px solid #e6e6e6; }
.jump svg { width: 16px; fill: none; stroke: #555; stroke-width: 3; }
.moon { position: absolute; right: 57px; bottom: 27px; width: 19px; fill: none; stroke: #aaa; stroke-width: 2; }
.corner { position: absolute; left: 26px; bottom: 50px; width: 22px; }
.cursor { position: absolute; left: 188px; top: 585px; width: 18px; }

.desk { display: flex; justify-content: center; align-items: flex-start; height: 129px; padding-top: 2px; background: linear-gradient(90deg, #280c62, #2d1082 35%, #3300a0 48%, #6400c0 62%, #5a00b8 90%, #5000e2); }
.dock { display: flex; align-items: center; gap: 24px; height: 120px; padding: 0 17px 8px; border-radius: 28px; background: linear-gradient(90deg, #8460cc, #7a58de 18%, #7b58e8 35%, #9052ff 50%, #c24bff 66%, #c14bff 82%, #a64dff); }
.app { position: relative; width: 78px; height: 80px; border-radius: 18px; flex: none; }
.app svg { width: 100%; height: 80px; }
.app .tall { height: 88px; margin-top: -4px; }
.wide { width: 90px; margin: 0 -7px; }
.run::after { content: ""; position: absolute; left: 37px; bottom: -21px; width: 5px; height: 7px; border-radius: 2px; background: #27105c; }
.sep { width: 2px; height: 90px; margin: 0 10px; background: #8f33cc; }
.calendar { overflow: hidden; background: #fafafa; text-align: center; color: #333; display: flex; flex-direction: column; }
.calendar span { background: #fa453c; color: #fff; font-size: 16px; line-height: 26px; font-weight: 500; }
.calendar b { font-size: 42px; line-height: 50px; font-weight: 400; }
.app.tv { background: #121b1d; display: flex; align-items: center; justify-content: center; gap: 2px; color: #fff; font-size: 32px; font-weight: 500; }
.tv svg { width: 23px; height: 28px; }

.subtitle { position: absolute; left: 0; right: 0; bottom: 254px; text-align: center; font: 500 83px/120px "Noto Sans CJK SC", sans-serif; color: #000; text-shadow: 0 0 3px #fff; }
.watermark { position: absolute; right: 40px; top: 145px; width: 520px; display: flex; justify-content: space-between; flex-direction: row-reverse; align-items: flex-end; color: #fff; font-size: 53px; line-height: 70px; opacity: .6; }
.watermark svg { width: 210px; fill: none; stroke: #f1f1f1; stroke-width: 6; stroke-linecap: round; }

.player { position: absolute; right: 262px; top: 50px; width: 966px; height: 168px; padding: 18px 41px 0; border-radius: 18px; color: #fff; background: radial-gradient(circle at 82% 0, rgba(88, 40, 58, .5), transparent 40%), linear-gradient(180deg, #51484f, #777076 50%, #8a888d); }
.info { display: flex; justify-content: space-between; align-items: center; height: 28px; font-size: 22px; }
.info time { width: 80px; }
.info time:last-child { text-align: right; }
.info h1 { font-size: 22px; line-height: 28px; }
input { appearance: none; margin: 0; background: transparent; display: block; }
.seek { width: 100%; height: 22px; margin-top: 8px; }
input::-webkit-slider-runnable-track { height: 6px; border-radius: 3px; background: #969297; }
.seek::-webkit-slider-runnable-track { background: linear-gradient(90deg, #938e93 32%, #7c7178 32%); }
input::-webkit-slider-thumb { appearance: none; width: 22px; height: 22px; margin-top: -8px; border-radius: 50%; background: #bbb6ba; box-shadow: 0 1px 2px rgba(0, 0, 0, .4); }
.controls { display: flex; align-items: center; height: 50px; margin-top: 25px; padding-left: 10px; }
.speaker { width: 28px; }
.volume { width: 156px; height: 20px; margin: 0 67px 0 23px; }
.volume::-webkit-slider-thumb { width: 18px; height: 18px; margin-top: -6px; }
.transport { display: flex; align-items: center; gap: 11px; }
.transport svg { width: 55px; fill: #fff; }
.transport .play { margin: 0 0 0 7px; }
.play svg { width: 47px; }
.exit { margin-left: auto; }
.exit svg { width: 42px; fill: #fff; }
</style>
